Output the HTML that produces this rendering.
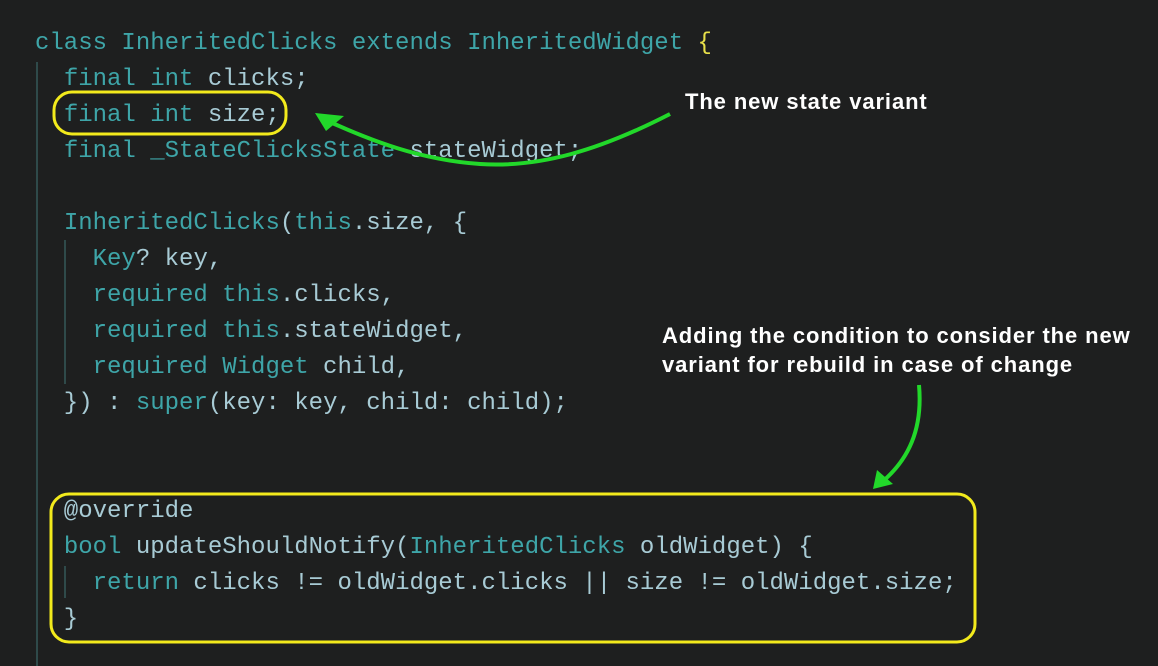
<!DOCTYPE html>
<html><head><meta charset="utf-8"><style>
body{margin:0;width:1158px;height:666px;background:#1e1f1f;overflow:hidden;position:relative}
.c{position:absolute;left:35px;font-family:"Liberation Mono",monospace;font-size:24px;line-height:36px;white-space:pre;color:#a8cbd5}
.k{color:#3ea5a8}.y{color:#e8e04a}
.g{position:absolute;width:2px;background:#2f4a4a}
.a{position:absolute;font-family:"Liberation Sans",sans-serif;font-weight:bold;font-size:22px;letter-spacing:0.9px;color:#fff;line-height:29px}
</style></head><body>
<div class="g" style="left:36px;top:62px;height:604px"></div>
<div class="g" style="left:64px;top:240px;height:144px"></div>
<div class="g" style="left:64px;top:566px;height:32px"></div>
<div class="c" style="top:26px"><span class="k">class InheritedClicks extends InheritedWidget</span> <span class="y">{</span>
  <span class="k">final int</span> clicks;
  <span class="k">final int</span> size;
  <span class="k">final _StateClicksState</span> stateWidget;

  <span class="k">InheritedClicks</span>(<span class="k">this</span>.size, {
    <span class="k">Key</span>? key,
    <span class="k">required this</span>.clicks,
    <span class="k">required this</span>.stateWidget,
    <span class="k">required Widget</span> child,
  }) : <span class="k">super</span>(key: key, child: child);


  @override
  <span class="k">bool</span> updateShouldNotify(<span class="k">InheritedClicks</span> oldWidget) {
    <span class="k">return</span> clicks != oldWidget.clicks || size != oldWidget.size;
  }</div>
<svg width="1158" height="666" style="position:absolute;left:0;top:0">
<rect x="54" y="92" width="232" height="42" rx="18" fill="none" stroke="#f2ea1c" stroke-width="3"/>
<rect x="51" y="494" width="924" height="148" rx="18" fill="none" stroke="#f2ea1c" stroke-width="3"/>
<path d="M670 114 C600 150 540 168 480 164 C420 160 370 140 330 122" fill="none" stroke="#22d82a" stroke-width="4"/>
<polygon points="315,113 344,116 326,131" fill="#22d82a"/>
<path d="M919 385 C923 430 908 460 882 482" fill="none" stroke="#22d82a" stroke-width="4"/>
<polygon points="873,489 877,470 893,484" fill="#22d82a"/>
</svg>
<div class="a" style="left:685px;top:87px">The new state variant</div>
<div class="a" style="left:662px;top:321px">Adding the condition to consider the new<br>variant for rebuild in case of change</div>
</body></html>
